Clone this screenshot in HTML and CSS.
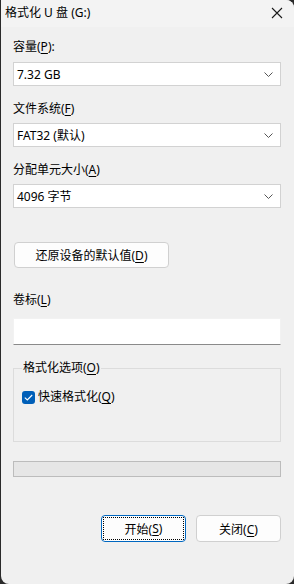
FILE: index.html
```html
<!DOCTYPE html>
<html lang="zh-CN">
<head>
    <meta charset="UTF-8">
    <meta name="viewport" content="width=device-width, initial-scale=1.0">
    <title>格式化 U 盘 (G:)</title>
    <link rel="stylesheet" href="styles.css">
</head>
<body>
    <div class="window">
        <div class="titlebar">
            <span class="title">格式化 U 盘 (G:)</span>
            <svg class="close" width="12" height="12" viewBox="0 0 12 12">
                <path d="M1 1 L11 11 M11 1 L1 11" stroke="#1a1a1a" stroke-width="1.1" fill="none"/>
            </svg>
        </div>
        <div class="content">
            <div class="label first">容量(<u>P</u>):</div>
            <div class="combo">
                <span>7.32 GB</span>
                <svg class="chev" width="9" height="5" viewBox="0 0 9 5"><path d="M0.5 0.5 L4.5 4.5 L8.5 0.5" stroke="#555" fill="none"/></svg>
            </div>

            <div class="label">文件系统(<u>F</u>)</div>
            <div class="combo">
                <span>FAT32 (默认)</span>
                <svg class="chev" width="9" height="5" viewBox="0 0 9 5"><path d="M0.5 0.5 L4.5 4.5 L8.5 0.5" stroke="#555" fill="none"/></svg>
            </div>

            <div class="label">分配单元大小(<u>A</u>)</div>
            <div class="combo">
                <span>4096 字节</span>
                <svg class="chev" width="9" height="5" viewBox="0 0 9 5"><path d="M0.5 0.5 L4.5 4.5 L8.5 0.5" stroke="#555" fill="none"/></svg>
            </div>

            <button class="btn restore">还原设备的默认值(<u>D</u>)</button>

            <div class="label volume">卷标(<u>L</u>)</div>
            <div class="textbox"></div>

            <fieldset class="group">
                <legend>格式化选项(<u>O</u>)</legend>
                <div class="check-row">
                    <span class="checkbox">
                        <svg width="9" height="7" viewBox="0 0 9 7"><path d="M0.8 3.6 L3.3 6 L8.2 1" stroke="#fff" stroke-width="1.1" fill="none"/></svg>
                    </span>
                    <span>快速格式化(<u>Q</u>)</span>
                </div>
            </fieldset>

            <div class="progress"></div>

            <div class="actions">
                <button class="btn default"><span class="focus">开始(<u>S</u>)</span></button>
                <button class="btn">关闭(<u>C</u>)</button>
            </div>
        </div>
    </div>
</body>
</html>
```

FILE: styles.css
```css
html, body {
    margin: 0;
    padding: 0;
}
body {
    background: #2a2a2a;
    font-family: "Noto Sans", "Noto Sans CJK SC", sans-serif;
    font-size: 12px;
    color: #000;
}
u {
    text-decoration: underline;
    text-underline-offset: 2px;
}
.window {
    width: 293px;
    height: 584px;
    margin-left: 1px;
    background: #f0f0f0;
    border-radius: 0 8px 8px 8px;
    overflow: hidden;
}
.titlebar {
    height: 27px;
    background: #f3f3f3;
    display: flex;
    align-items: center;
    justify-content: space-between;
    padding: 0 11px 0 4px;
}
.title {
    line-height: 16px;
    margin-top: -1px;
}
.close {
    margin-top: -1px;
}
.content {
    padding: 0 13px 0 12px;
}
.label {
    line-height: 16px;
    margin-top: 15px;
}
.label.first {
    margin-top: 12px;
}
.combo {
    height: 24px;
    box-sizing: border-box;
    margin-top: 6px;
    background: #fff;
    border: 1px solid #d2d2d2;
    display: flex;
    align-items: center;
    justify-content: space-between;
    padding: 0 7px 0 3px;
}
.label.first + .combo {
    margin-top: 7px;
}
.btn {
    font-family: inherit;
    font-size: 12px;
    color: #000;
    background: #fdfdfd;
    border: 1px solid #d0d0d0;
    border-radius: 4px;
    height: 27px;
    width: 85px;
    padding: 0;
    box-sizing: border-box;
}
.btn.restore {
    display: block;
    width: 155px;
    height: 26px;
    margin: 34px 0 0 1px;
}
.label.volume {
    margin-top: 24px;
}
.textbox {
    height: 27px;
    box-sizing: border-box;
    margin-top: 10px;
    background: #fff;
    border: 1px solid #f2f2f2;
    border-bottom: 1px solid #8a8a8a;
}
.group {
    margin: 15px 0 0 0;
    padding: 13px 8px 0 8px;
    height: 82px;
    box-sizing: border-box;
    border: 1px solid #dcdcdc;
}
.group legend {
    padding: 0 1px;
    line-height: 16px;
}
.check-row {
    display: flex;
    align-items: center;
    gap: 3px;
    line-height: 16px;
}
.checkbox {
    width: 13px;
    height: 13px;
    border-radius: 3px;
    background: #005fb8;
    display: flex;
    align-items: center;
    justify-content: center;
}
.progress {
    margin-top: 19px;
    height: 16px;
    box-sizing: border-box;
    background: #e6e6e6;
    border: 1px solid #bcbcbc;
}
.actions {
    margin-top: 38px;
    display: flex;
    justify-content: flex-end;
    gap: 10px;
}
.btn.default {
    border-color: #0067c0;
    padding: 1px;
    display: flex;
}
.focus {
    flex: 1;
    border: 1px dotted #000;
    display: flex;
    align-items: center;
    justify-content: center;
}
```
